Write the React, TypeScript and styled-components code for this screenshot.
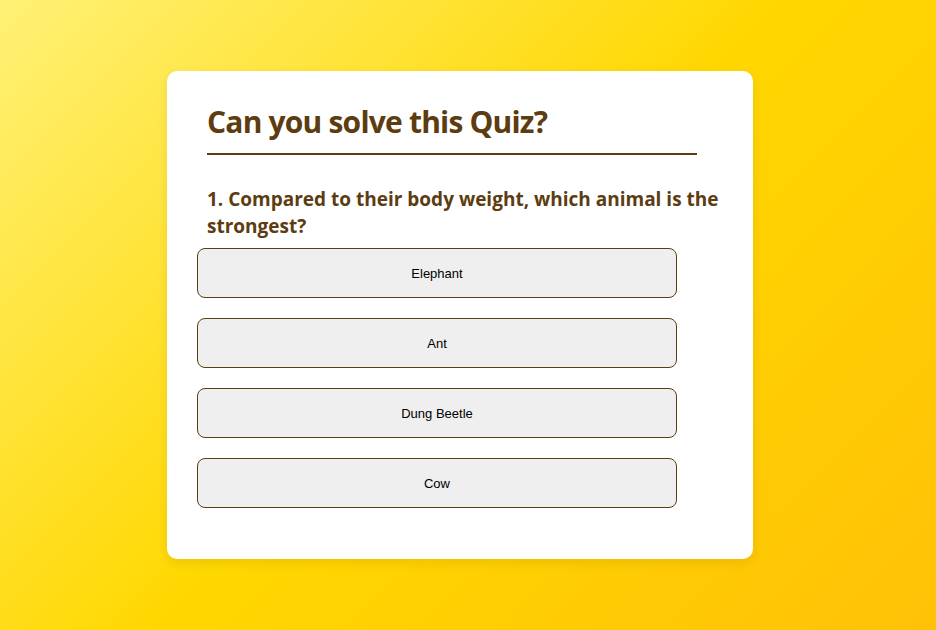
import React, { useState } from "react";
import styled, { createGlobalStyle } from "styled-components";

const GlobalStyle = createGlobalStyle`
    html, body {
        margin: 0;
        padding: 0;
    }
    body {
        font-family: "Open Sans", "Noto Sans", sans-serif;
    }
`;

const Page = styled.div`
    display: flex;
    justify-content: center;
    align-items: center;
    box-sizing: border-box;
    width: 100%;
    height: 630px;
    padding-right: 16px;
    background: linear-gradient(135deg, #fff176 0%, #ffd700 50%, #ffc107 100%);
`;

const Card = styled.div`
    box-sizing: border-box;
    width: 586px;
    padding: 31px 40px 51px;
    background: #ffffff;
    border-radius: 10px;
    box-shadow: 0 4px 12px rgba(0, 0, 0, 0.08);
`;

const Title = styled.h1`
    width: 490px;
    margin: 0;
    padding-bottom: 11px;
    font-size: 30px;
    line-height: 40px;
    font-weight: 700;
    letter-spacing: -0.8px;
    color: #5c3c10;
    border-bottom: 2px solid #5c3c10;
`;

const Question = styled.h2`
    margin: 31px -8px 8px 0;
    font-size: 19px;
    line-height: 27px;
    font-weight: 700;
    color: #5c3c10;
`;

const Options = styled.div`
    display: flex;
    flex-direction: column;
    gap: 20px;
    margin-left: -10px;
`;

const Option = styled.button<{ $picked: boolean }>`
    box-sizing: border-box;
    width: 480px;
    height: 50px;
    font-family: "Liberation Sans", Arial, sans-serif;
    font-size: 13px;
    color: #000000;
    background: ${(p) => (p.$picked ? "#e2e2e2" : "#efefef")};
    border: 1px solid #5c3c10;
    border-radius: 8px;
    cursor: pointer;
`;

const answers = ["Elephant", "Ant", "Dung Beetle", "Cow"];

const App: React.FC = (): JSX.Element => {
    const [picked, setPicked] = useState<string>("");

    return (
        <>
            <GlobalStyle />
            <Page>
                <Card>
                    <Title>Can you solve this Quiz?</Title>
                    <Question>
                        1. Compared to their body weight, which animal is the
                        strongest?
                    </Question>
                    <Options>
                        {answers.map((a) => (
                            <Option
                                key={a}
                                $picked={picked === a}
                                onClick={() => setPicked(a)}
                            >
                                {a}
                            </Option>
                        ))}
                    </Options>
                </Card>
            </Page>
        </>
    );
};

export default App;
